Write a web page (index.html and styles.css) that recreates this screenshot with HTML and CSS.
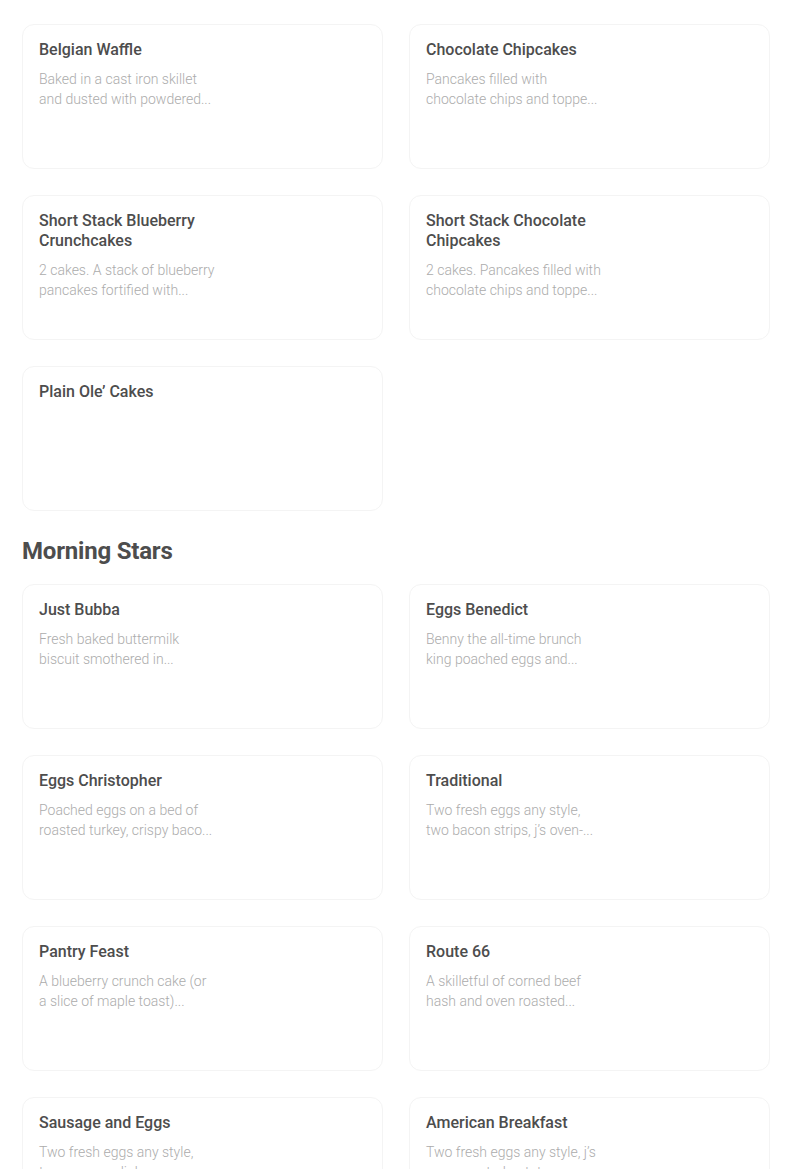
FILE: index.html
```html
<!DOCTYPE html>
<html lang="en">
<head>
    <meta charset="UTF-8">
    <meta name="viewport" content="width=device-width, initial-scale=1.0">
    <title>Menu</title>
    <link rel="stylesheet" href="styles.css">
</head>
<body>
    <main class="menu">
        <section class="menu-section">
            <div class="item-grid">
                <div class="item-card">
                    <div class="item-text">
                        <h3>Belgian Waffle</h3>
                        <p>Baked in a cast iron skillet and dusted with powdered...</p>
                    </div>
                </div>
                <div class="item-card">
                    <div class="item-text">
                        <h3>Chocolate Chipcakes</h3>
                        <p>Pancakes filled with chocolate chips and toppe...</p>
                    </div>
                </div>
                <div class="item-card">
                    <div class="item-text">
                        <h3>Short Stack Blueberry Crunchcakes</h3>
                        <p>2 cakes. A stack of blueberry pancakes fortified with...</p>
                    </div>
                </div>
                <div class="item-card">
                    <div class="item-text">
                        <h3>Short Stack Chocolate Chipcakes</h3>
                        <p>2 cakes. Pancakes filled with chocolate chips and toppe...</p>
                    </div>
                </div>
                <div class="item-card">
                    <div class="item-text">
                        <h3>Plain Ole’ Cakes</h3>
                    </div>
                </div>
            </div>
        </section>

        <section class="menu-section">
            <h2 class="section-title">Morning Stars</h2>
            <div class="item-grid">
                <div class="item-card">
                    <div class="item-text">
                        <h3>Just Bubba</h3>
                        <p>Fresh baked buttermilk biscuit smothered in...</p>
                    </div>
                </div>
                <div class="item-card">
                    <div class="item-text">
                        <h3>Eggs Benedict</h3>
                        <p>Benny the all-time brunch king poached eggs and...</p>
                    </div>
                </div>
                <div class="item-card">
                    <div class="item-text">
                        <h3>Eggs Christopher</h3>
                        <p>Poached eggs on a bed of roasted turkey, crispy baco...</p>
                    </div>
                </div>
                <div class="item-card">
                    <div class="item-text">
                        <h3>Traditional</h3>
                        <p>Two fresh eggs any style, two bacon strips, j’s oven-...</p>
                    </div>
                </div>
                <div class="item-card">
                    <div class="item-text">
                        <h3>Pantry Feast</h3>
                        <p>A blueberry crunch cake (or a slice of maple toast)...</p>
                    </div>
                </div>
                <div class="item-card">
                    <div class="item-text">
                        <h3>Route 66</h3>
                        <p>A skilletful of corned beef hash and oven roasted...</p>
                    </div>
                </div>
                <div class="item-card">
                    <div class="item-text">
                        <h3>Sausage and Eggs</h3>
                        <p>Two fresh eggs any style, two sausage links or...</p>
                    </div>
                </div>
                <div class="item-card">
                    <div class="item-text">
                        <h3>American Breakfast</h3>
                        <p>Two fresh eggs any style, j’s oven-roasted potatoes...</p>
                    </div>
                </div>
            </div>
        </section>
    </main>
</body>
</html>
```

FILE: styles.css
```css
:root {
    --title-color: #4d4d4d;
    --desc-color: #acacac;
    --card-border: #f4f4f4;
}

* {
    margin: 0;
    padding: 0;
    box-sizing: border-box;
}

body {
    font-family: Roboto, "Liberation Sans", sans-serif;
    background-color: #fff;
    color: var(--title-color);
}

.menu {
    padding: 24px 34px 0 22px;
}

.section-title {
    font-size: 24px;
    line-height: 32px;
    font-weight: 700;
    letter-spacing: -0.2px;
    color: var(--title-color);
    margin: 24px 0 17px;
}

.item-grid {
    display: grid;
    grid-template-columns: 1fr 1fr;
    gap: 26px;
}

.item-card {
    height: 145px;
    border: 1px solid var(--card-border);
    border-radius: 12px;
    padding: 15px 16px;
    background-color: #fff;
}

.item-text {
    width: 176px;
}

.item-text h3 {
    font-size: 16px;
    line-height: 20px;
    font-weight: 500;
    color: var(--title-color);
}

.item-text p {
    margin-top: 9px;
    font-size: 14px;
    line-height: 20px;
    font-weight: 300;
    color: var(--desc-color);
}
```
